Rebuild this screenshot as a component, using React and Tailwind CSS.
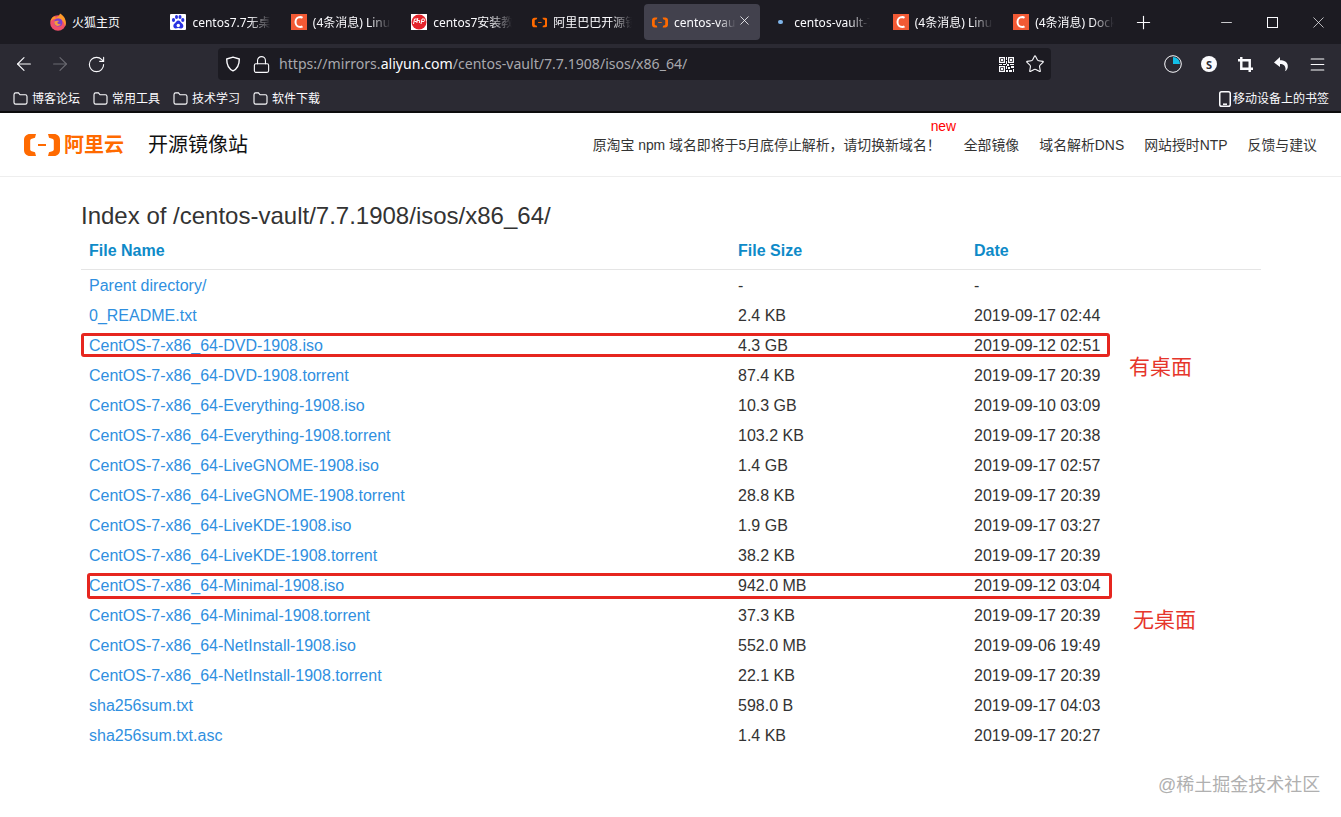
import React from 'react';
import { ArrowLeft, ArrowRight, RotateCw, Lock, Star, Plus, Minus, X, Menu } from 'lucide-react';

const AliIcon = ({ className = 'w-4 h-[11px]' }) => (
  <svg viewBox="0 0 36 22" className={className} fill="#ff6a00">
    <path d="M12 0H6C2.500 0 0 2.500 0 6v10c0 3.500 2.500 6 6 6h6l-1-3.800-3.200-.9c-1-.3-1.600-1-1.600-2V6.700c0-1 .6-1.700 1.600-2L11 3.800 12 0z" />
    <path d="M24 0h6c3.500 0 6 2.500 6 6v10c0 3.500-2.500 6-6 6h-6l1-3.800 3.200-.9c1-.3 1.600-1 1.600-2V6.700c0-1-.6-1.700-1.600-2L25 3.800 24 0z" />
    <path d="M14 10h8v2h-8z" />
  </svg>
);
const CIcon = () => (
  <div className="w-4 h-4 shrink-0 bg-[#f25a35] flex items-center justify-center">
    <svg viewBox="0 0 16 16" className="w-4 h-4" fill="none" stroke="#fff" strokeWidth="2"><path d="M11.500 3.800A5.200 5.200 0 0 0 9.300 3C6.300 3 4.500 5.200 4.500 8s1.800 5 4.800 5c.8 0 1.600-.2 2.200-.6" /></svg>
  </div>
);
const Fox = () => (
  <svg viewBox="0 0 16 18" className="w-4 h-[18px] shrink-0">
    <circle cx="8" cy="10" r="7.800" fill="#f0506a" />
    <path d="M.4 9c.3-3 2-5 4-6 .2 1 1 1.600 2 1.700C8 3.500 9.500 2.500 10 .5c3.500 2 5.800 5 5.800 9.500 0 1.200-.2 2.200-.7 3.200C14 8 11 5.500 7 5.500 4 5.500 1.500 7 .4 9z" fill="#ff9a2a" />
    <circle cx="8.300" cy="9.500" r="4" fill="#7b3fd0" />
    <path d="M4.300 8.500c1.500-.8 3.500-1 5-.2-1 .3-2 .6-1.800 1.700.2 1.200 1.800 1.500 3.300.8-.6 1.500-2 2.400-3.500 2.200-2-.3-3.300-2.300-3-4.500z" fill="#f59a3e" />
  </svg>
);
const Baidu = () => (
  <div className="w-4 h-4 shrink-0 bg-white rounded-[1px] flex items-center justify-center">
    <svg viewBox="0 0 16 16" className="w-4 h-4" fill="#2932e1">
      <ellipse cx="3.500" cy="6" rx="1.600" ry="2.100" /><ellipse cx="6.500" cy="3" rx="1.500" ry="2" /><ellipse cx="10" cy="3" rx="1.500" ry="2" /><ellipse cx="12.800" cy="6" rx="1.600" ry="2" />
      <path d="M8.300 6.500c-1.800 0-2.400 2-4 3.200-1.500 1.200-1.300 4.500 1.300 4.700 1.300.1 1.800-.4 2.800-.4s1.800.6 3.100.4c2.400-.4 2.300-3.400.8-4.600-1.700-1.300-1.900-3.300-4-3.300z" />
      <circle cx="8.300" cy="11.500" r="1.700" fill="#fff" />
    </svg>
  </div>
);
const Php = () => (
  <div className="w-4 h-4 shrink-0 bg-white flex items-center justify-center">
    <svg viewBox="0 0 16 16" className="w-4 h-4">
      <circle cx="8" cy="8" r="7.500" fill="#e5242b" />
      <path d="M2.500 10l1-5h2c1 0 1 1.500 0 2.500H3.500M6.800 4l-1 5M6.300 6.500h2.500l-.5 2.500M10 10l1-5h2c1 0 1 1.500 0 2.500h-2" fill="none" stroke="#fff" strokeWidth="1" />
    </svg>
  </div>
);
const Dot = () => (
  <div className="w-4 h-4 shrink-0 flex items-center justify-center"><div className="w-[5px] h-[4px] rounded-full bg-[#7fb5ea]" /></div>
);

const tabs = [
  { icon: <Fox />, text: '火狐主页' },
  { icon: <Baidu />, text: 'centos7.7无桌面版下载', fade: true },
  { icon: <CIcon />, text: '(4条消息) Linux安装', fade: true },
  { icon: <Php />, text: 'centos7安装教程详解', fade: true },
  { icon: <AliIcon />, text: '阿里巴巴开源镜像站', fade: true },
  { icon: <AliIcon />, text: 'centos-vault', fade: true, active: true },
  { icon: <Dot />, text: 'centos-vault-7.7', fade: true, short: true },
  { icon: <CIcon />, text: '(4条消息) Linux安装', fade: true },
  { icon: <CIcon />, text: '(4条消息) Docker', fade: true },
];

const Tab = ({ icon, text, fade, active, short }) => (
  <div className={`w-[116.400px] h-9 shrink-0 rounded flex items-center pl-2 pr-2 gap-1.5 relative ${active ? 'bg-[#42414d]' : ''}`}>
    {icon}
    <span className={`mt-px text-xs text-[#fbfbfe] whitespace-nowrap overflow-hidden ${active ? 'w-[62px]' : short ? 'w-[76px]' : 'w-[80px]'} ${fade ? '[mask-image:linear-gradient(to_right,black_72%,transparent)]' : ''}`}>{text}</span>
    {active && <X className="w-[15px] h-[15px] text-[#fbfbfe] absolute right-[8px] top-[9px]" strokeWidth={1.3} />}
  </div>
);

const Folder = () => (
  <svg viewBox="0 0 16 14" className="w-[15px] h-[13px] shrink-0" fill="none" stroke="#fbfbfe" strokeWidth="1.200">
    <path d="M1 3c0-1.100.7-2 1.800-2h3l1.700 2h5.700c1.100 0 1.800.8 1.800 1.800v6.400c0 1.100-.7 1.800-1.800 1.800H2.800C1.700 13 1 12.300 1 11.200V3z" />
  </svg>
);

const Bm = ({ text }) => (
  <div className="w-20 flex items-center gap-1 shrink-0">
    <Folder />
    <span className="text-xs text-[#fbfbfe] whitespace-nowrap">{text}</span>
  </div>
);

const Btn = ({ children }) => <div className="w-9 h-8 shrink-0 flex items-center justify-center text-[#fbfbfe]">{children}</div>;

const Qr = () => (
  <svg viewBox="0 0 15 15" className="w-[15px] h-[15px]" fill="#fbfbfe">
    <path fillRule="evenodd" d="M0 0h6v6H0zM1.200 1.200v3.600h3.600V1.200zM9 0h6v6H9zM10.200 1.200v3.600h3.600V1.200zM0 9h6v6H0zM1.200 10.200v3.600h3.600v-3.600z" />
    <path d="M2 2h2v2H2zM11 2h2v2h-2zM2 11h2v2H2zM7 0h1v3H7zM7 4h1v3H7zM0 7h3v1H0zM4 7h3v1H4zM8 7h2v2H8zM11 7h4v1h-4zM7 9h1v3H7zM9 10h2v2H9zM12 9h3v2h-3zM7 13h2v2H7zM10 13h3v2h-3zM14 12h1v3h-1z" />
  </svg>
);

const Shield = () => (
  <svg viewBox="0 0 16 16" className="w-4 h-4" fill="none" stroke="#fbfbfe" strokeWidth="1.400">
    <path d="M8 1.200 14.300 3c0 5.500-1 9.500-6.300 11.800C2.700 12.500 1.700 8.500 1.700 3L8 1.200z" strokeLinejoin="round" />
  </svg>
);

const rows = [
  ['Parent directory/', '-', '-'],
  ['0_README.txt', '2.4 KB', '2019-09-17 02:44'],
  ['CentOS-7-x86_64-DVD-1908.iso', '4.3 GB', '2019-09-12 02:51'],
  ['CentOS-7-x86_64-DVD-1908.torrent', '87.4 KB', '2019-09-17 20:39'],
  ['CentOS-7-x86_64-Everything-1908.iso', '10.3 GB', '2019-09-10 03:09'],
  ['CentOS-7-x86_64-Everything-1908.torrent', '103.2 KB', '2019-09-17 20:38'],
  ['CentOS-7-x86_64-LiveGNOME-1908.iso', '1.4 GB', '2019-09-17 02:57'],
  ['CentOS-7-x86_64-LiveGNOME-1908.torrent', '28.8 KB', '2019-09-17 20:39'],
  ['CentOS-7-x86_64-LiveKDE-1908.iso', '1.9 GB', '2019-09-17 03:27'],
  ['CentOS-7-x86_64-LiveKDE-1908.torrent', '38.2 KB', '2019-09-17 20:39'],
  ['CentOS-7-x86_64-Minimal-1908.iso', '942.0 MB', '2019-09-12 03:04'],
  ['CentOS-7-x86_64-Minimal-1908.torrent', '37.3 KB', '2019-09-17 20:39'],
  ['CentOS-7-x86_64-NetInstall-1908.iso', '552.0 MB', '2019-09-06 19:49'],
  ['CentOS-7-x86_64-NetInstall-1908.torrent', '22.1 KB', '2019-09-17 20:39'],
  ['sha256sum.txt', '598.0 B', '2019-09-17 04:03'],
  ['sha256sum.txt.asc', '1.4 KB', '2019-09-17 20:27'],
];

export default function App() {
  return (
    <div className="relative w-[1341px] h-[817px] overflow-hidden bg-white font-['Liberation_Sans','Noto_Sans_CJK_SC',sans-serif]">
      {/* Browser chrome */}
      <div className="font-['Noto_Sans','Noto_Sans_CJK_SC',sans-serif] bg-[#2b2a33] border-b-2 border-[#0c0c0d] h-[113px]">
        <div className="h-11 bg-[#1c1b22] flex items-center pl-[42px]">
          <div className="flex gap-1">
            {tabs.map((t, i) => <Tab key={i} {...t} />)}
          </div>
          <div className="w-[44px] flex justify-center text-[#fbfbfe]"><Plus className="w-[21px] h-[21px]" strokeWidth={1.3} /></div>
          <div className="ml-auto flex items-center text-[#fbfbfe]">
            <div className="w-[46px] flex justify-center"><Minus className="w-[17px] h-[17px]" strokeWidth={1.1} /></div>
            <div className="w-[46px] flex justify-center"><div className="w-[11px] h-[11px] border border-[#fbfbfe]" /></div>
            <div className="w-[46px] flex justify-center"><X className="w-[19px] h-[19px]" strokeWidth={0.9} /></div>
          </div>
        </div>
        <div className="h-10 flex items-center justify-between px-1.5">
          <div className="flex">
            <Btn><ArrowLeft className="w-[22px] h-[22px]" strokeWidth={1.2} /></Btn>
            <Btn><ArrowRight className="w-[22px] h-[22px] text-[#6b6a72]" strokeWidth={1.2} /></Btn>
            <Btn><RotateCw className="w-[19px] h-[19px]" strokeWidth={1.4} /></Btn>
          </div>
          <div className="w-[833px] h-8 bg-[#1c1b22] rounded flex items-center pl-[7px] pr-[6px]">
            <div className="w-4 flex justify-center"><Shield /></div>
            <div className="w-4 ml-3 flex justify-center text-[#fbfbfe]"><Lock className="w-[19px] h-[19px] shrink-0" strokeWidth={1.4} /></div>
            <span className="ml-2.5 text-[14.100px] text-[#a8a8ad] whitespace-nowrap">https://mirrors.<span className="text-[#fbfbfe]">aliyun.com</span>/centos-vault/7.7.1908/isos/x86_64/</span>
            <div className="ml-auto flex items-center gap-[11px] text-[#fbfbfe]">
              <Qr />
              <Star className="w-5 h-5" strokeWidth={1.3} />
            </div>
          </div>
          <div className="flex">
            <Btn>
              <svg viewBox="0 0 18 18" className="w-[18px] h-[18px]"><circle cx="9" cy="9" r="8.300" fill="none" stroke="#fbfbfe" strokeWidth="1" /><path d="M9 2a7 7 0 0 1 7 7H9z" fill="#12bfe8" /></svg>
            </Btn>
            <Btn>
              <div className="w-4 h-4 rounded-full bg-[#fbfbfe] flex items-center justify-center text-[11px] leading-none font-bold text-[#2b2a33]">S</div>
            </Btn>
            <Btn>
              <svg viewBox="0 0 16 16" className="w-[15px] h-[15px]" fill="none" stroke="#fbfbfe" strokeWidth="2.600"><path d="M0 3.500h12.500V16M3.500 0v12.500H16" /></svg>
            </Btn>
            <Btn>
              <svg viewBox="0 0 16 16" className="w-4 h-4" fill="#fbfbfe"><path d="M7 1 1 6.500 7 11V8c3 0 5 1 5.500 4.500.2 1-.2 2-.8 2.800 2.300-.9 3.300-3.300 3.100-5.600C14.500 6 11 4.300 7 4.300V1z" /></svg>
            </Btn>
            <Btn><Menu className="w-[19px] h-[19px]" strokeWidth={1.3} /></Btn>
          </div>
        </div>
        <div className="h-[27px] flex items-center pl-[13px] pr-[12px] pt-[2px]">
          <Bm text="博客论坛" /><Bm text="常用工具" /><Bm text="技术学习" /><Bm text="软件下载" />
          <div className="ml-auto flex items-center gap-0.5 text-[#fbfbfe]">
            <svg viewBox="0 0 12 16" className="w-3 h-4 shrink-0" fill="none" stroke="#fbfbfe" strokeWidth="1.500">
              <rect x=".75" y=".75" width="10.500" height="14.500" rx="1.800" />
              <path d="M4 13.200h4" />
            </svg>
            <span className="text-xs whitespace-nowrap">移动设备上的书签</span>
          </div>
        </div>
      </div>

      {/* Site header */}
      <div className="h-16 border-b border-[#eeeeee] flex items-center pl-6 pr-6">
        <AliIcon className="w-9 h-[22px] shrink-0" />
        <span className="ml-1 text-[20px] leading-none font-bold text-[#ff6a00] whitespace-nowrap">阿里云</span>
        <span className="ml-6 text-[20px] leading-none text-[#111] whitespace-nowrap">开源镜像站</span>
        <div className="ml-auto flex items-center gap-[20px] text-[13.900px] text-[#333] whitespace-nowrap mt-px">
          <span className="relative mr-[3px]">原淘宝 npm 域名即将于5月底停止解析，请切换新域名！
            <span className="absolute left-[338px] -top-[19px] text-[#f00]">new</span>
          </span>
          <span>全部镜像</span>
          <span>域名解析DNS</span>
          <span>网站授时NTP</span>
          <span>反馈与建议</span>
        </div>
      </div>

      {/* Content */}
      <div className="pl-[81px] w-[1261px] pt-[25px]">
        <h1 className="text-[24px] leading-[27px] text-[#333]">Index of /centos-vault/7.7.1908/isos/x86_64/</h1>
        <table className="mt-[6px] w-[1180px] table-fixed border-collapse text-base text-[#333]">
          <colgroup><col className="w-[649px]" /><col className="w-[236px]" /><col className="w-[295px]" /></colgroup>
          <thead>
            <tr className="h-[34px] border-b border-[#e5e5e5]">
              {['File Name', 'File Size', 'Date'].map((h) => (
                <th key={h} className="px-2 pb-px text-left font-bold text-[#0e8ac8]">{h}</th>
              ))}
            </tr>
          </thead>
          <tbody>
            {rows.map((r, i) => (
              <tr key={r[0]} className={i === 0 ? 'h-8' : 'h-[30px]'}>
                <td className={`px-2 text-[#2f8fe0] ${i === 0 ? 'pt-0.5' : ''}`}>{r[0]}</td>
                <td className={`px-2 ${i === 0 ? 'pt-0.5' : ''}`}>{r[1]}</td>
                <td className={`px-2 ${i === 0 ? 'pt-0.5' : ''}`}>{r[2]}</td>
              </tr>
            ))}
          </tbody>
        </table>
      </div>

      {/* Annotations */}
      <div className="absolute left-[81px] top-[333px] w-[1029px] h-[24px] border-[3px] border-[#e6261f] rounded-[3px]" />
      <div className="absolute left-[87px] top-[573px] w-[1025px] h-[26px] border-[3px] border-[#e6261f] rounded-[3px]" />
      <div className="absolute left-[1129px] top-[353px] text-[21px] leading-[28px] text-[#e6362b]">有桌面</div>
      <div className="absolute left-[1133px] top-[606px] text-[21px] leading-[28px] text-[#e6362b]">无桌面</div>
      <div className="absolute left-[1158px] top-[773px] text-[18px] leading-[24px] text-[#b0b0b0] whitespace-nowrap">@稀土掘金技术社区</div>
    </div>
  );
}
